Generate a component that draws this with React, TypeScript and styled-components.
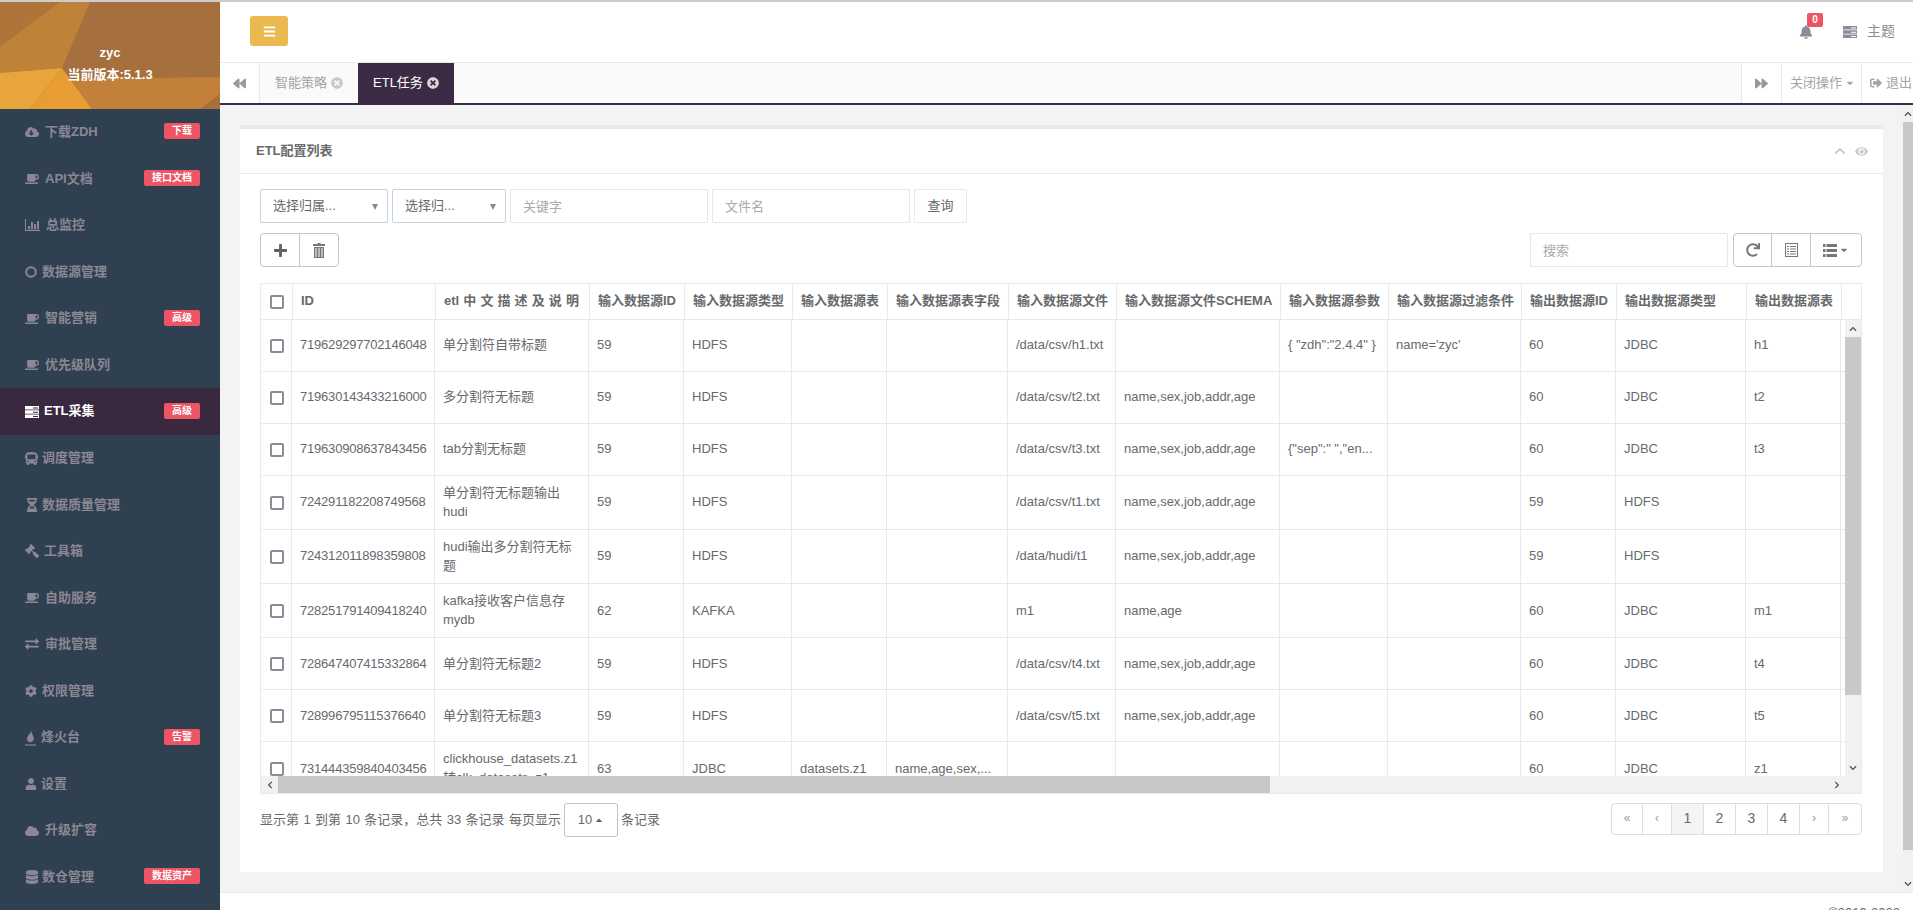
import React from 'react';
import styled, { createGlobalStyle } from 'styled-components';
import {
  FaBackward, FaBars, FaBell, FaBus, FaCaretDown, FaCaretUp, FaChevronDown, FaChevronLeft,
  FaChevronRight, FaChevronUp, FaCloud, FaCloudDownloadAlt, FaCog, FaCoffee, FaDatabase, FaExchangeAlt, FaEye,
  FaForward, FaGavel, FaHourglassHalf, FaPlus, FaRedo, FaSignOutAlt, FaTimesCircle, FaUser,
} from 'react-icons/fa';

const GlobalStyle = createGlobalStyle`
  html, body {
    margin: 0;
    height: 100%;
    overflow: hidden;
  }
  body {
    font-family: "Liberation Sans", "Noto Sans CJK SC", sans-serif;
    font-size: 13px;
    line-height: 1.42857;
    color: #676a6c;
  }
  * {
    box-sizing: border-box;
  }
`;

const FireIcon: React.FC = () => (
  <svg width="11" height="16" viewBox="0 0 11 16" fill="currentColor">
    <path d="M6 0c.6 2.400-1 3.400-2.400 5C2.400 6.400 1.800 7.600 2 9.200c.2 1.700 1.500 2.900 3.200 3 2.300.1 3.800-1.700 3.600-3.900-.1-1.500-.8-2.500-1.300-3.500-.7-1.500-.9-3.200-1.500-4.800z" />
    <rect x="0" y="14.400" width="11" height="1.200" />
  </svg>
);

const ServerIcon: React.FC = () => (
  <svg width="14" height="12" viewBox="0 0 14 12" fill="currentColor" fillRule="evenodd">
    <path d="M0 0h14v3.500H0z M8 1.500h5v1H8z" />
    <path d="M0 4.300h14v3.500H0z M8 5.800h5v1H8z" />
    <path d="M0 8.500h14V12H0z M8 10h5v1H8z" />
  </svg>
);

const BarsIcon: React.FC = () => (
  <svg width="15" height="12" viewBox="0 0 15 12" fill="currentColor">
    <path d="M0 0h1v11h14v1H0z" />
    <path d="M3 7h2v3.500H3z M6 3h2v7.500H6z M9 5h2v5.500H9z M12 2h2v8.500h-2z" />
  </svg>
);

const RingIcon: React.FC = () => (
  <svg width="12" height="12" viewBox="0 0 12 12" fill="none" stroke="currentColor" strokeWidth="2">
    <circle cx="6" cy="6" r="4.800" />
  </svg>
);

const TrashIcon: React.FC = () => (
  <svg width="12" height="15" viewBox="0 0 12 15" fill="currentColor">
    <path d="M4.500 0h3v1H12v2H0V1h4.500z" />
    <path d="M1 4h10v11H1z M2.500 5v9h1V5z M5.500 5v9h1V5z M8.500 5v9h1V5z" fillRule="evenodd" />
  </svg>
);

const ListAltIcon: React.FC = () => (
  <svg width="13" height="14" viewBox="0 0 13 14" fill="currentColor" fillRule="evenodd">
    <path d="M0 0h13v14H0z M1 1v12h11V1z" />
    <path d="M2 3h2v1H2z M5 3h6v1H5z M2 5.500h2v1H2z M5 5.500h6v1H5z M2 8h2v1H2z M5 8h6v1H5z M2 10.500h2v1H2z M5 10.500h6v1H5z" />
  </svg>
);

const RowsIcon: React.FC = () => (
  <svg width="14" height="13" viewBox="0 0 14 13" fill="currentColor">
    <path d="M0 0h2.500v3H0z M3.500 0H14v3H3.500z M0 5h2.500v3H0z M3.500 5H14v3H3.500z M0 10h2.500v3H0z M3.500 10H14v3H3.500z" />
  </svg>
);

type NavEntry = { label: string; icon: React.ReactNode; inset: number; badge?: string; active?: boolean };

const GavelIcon = styled(FaGavel)`
  transform: scaleX(-1);
`;

const navItems: NavEntry[] = [
  { label: '下载ZDH', icon: <FaCloudDownloadAlt size={14} />, inset: 20, badge: '下载' },
  { label: 'API文档', icon: <FaCoffee size={14} />, inset: 20, badge: '接口文档' },
  { label: '总监控', icon: <BarsIcon />, inset: 21 },
  { label: '数据源管理', icon: <RingIcon />, inset: 17 },
  { label: '智能营销', icon: <FaCoffee size={14} />, inset: 20, badge: '高级' },
  { label: '优先级队列', icon: <FaCoffee size={14} />, inset: 20 },
  { label: 'ETL采集', icon: <ServerIcon />, inset: 19, badge: '高级', active: true },
  { label: '调度管理', icon: <FaBus size={13} />, inset: 17 },
  { label: '数据质量管理', icon: <FaHourglassHalf size={14} />, inset: 17 },
  { label: '工具箱', icon: <GavelIcon size={14} />, inset: 19 },
  { label: '自助服务', icon: <FaCoffee size={14} />, inset: 20 },
  { label: '审批管理', icon: <FaExchangeAlt size={14} />, inset: 20 },
  { label: '权限管理', icon: <FaCog size={12} />, inset: 17 },
  { label: '烽火台', icon: <FireIcon />, inset: 16, badge: '告警' },
  { label: '设置', icon: <FaUser size={12} />, inset: 16 },
  { label: '升级扩容', icon: <FaCloud size={14} />, inset: 20 },
  { label: '数仓管理', icon: <FaDatabase size={14} />, inset: 17, badge: '数据资产' },
];

const headers = [
  '', 'ID', 'etl 中 文 描 述 及 说 明', '输入数据源ID', '输入数据源类型', '输入数据源表', '输入数据源表字段', '输入数据源文件',
  '输入数据源文件SCHEMA', '输入数据源参数', '输入数据源过滤条件', '输出数据源ID', '输出数据源类型', '输出数据源表', '',
];
const headWidths = [32, 143, 154, 95, 108, 95, 121, 108, 164, 108, 133, 95, 130, 95, 20];
const bodyWidths = [31, 143, 154, 95, 108, 95, 121, 108, 164, 108, 133, 95, 130, 95, 60];
const schema = 'name,sex,job,addr,age';

const rows: string[][] = [
  ['719629297702146048', '单分割符自带标题', '59', 'HDFS', '', '', '/data/csv/h1.txt', '', '{ "zdh":"2.4.4" }', "name='zyc'", '60', 'JDBC', 'h1'],
  ['719630143433216000', '多分割符无标题', '59', 'HDFS', '', '', '/data/csv/t2.txt', schema, '', '', '60', 'JDBC', 't2'],
  ['719630908637843456', 'tab分割无标题', '59', 'HDFS', '', '', '/data/csv/t3.txt', schema, '{"sep":" ","en...', '', '60', 'JDBC', 't3'],
  ['724291182208749568', '单分割符无标题输出hudi', '59', 'HDFS', '', '', '/data/csv/t1.txt', schema, '', '', '59', 'HDFS', ''],
  ['724312011898359808', 'hudi输出多分割符无标题', '59', 'HDFS', '', '', '/data/hudi/t1', schema, '', '', '59', 'HDFS', ''],
  ['728251791409418240', 'kafka接收客户信息存mydb', '62', 'KAFKA', '', '', 'm1', 'name,age', '', '', '60', 'JDBC', 'm1'],
  ['728647407415332864', '单分割符无标题2', '59', 'HDFS', '', '', '/data/csv/t4.txt', schema, '', '', '60', 'JDBC', 't4'],
  ['728996795115376640', '单分割符无标题3', '59', 'HDFS', '', '', '/data/csv/t5.txt', schema, '', '', '60', 'JDBC', 't5'],
  ['731444359840403456', 'clickhouse_datasets.z1 转clk_datasets_z1', '63', 'JDBC', 'datasets.z1', 'name,age,sex,...', '', '', '', '', '60', 'JDBC', 'z1'],
];

const pages: { label: string; w: number; active?: boolean; faint?: boolean }[] = [
  { label: '«', w: 31, faint: true },
  { label: '‹', w: 29, faint: true },
  { label: '1', w: 32, active: true },
  { label: '2', w: 32 },
  { label: '3', w: 32 },
  { label: '4', w: 32 },
  { label: '›', w: 29, faint: true },
  { label: '»', w: 32, faint: true },
];

export default function App() {
  return (
    <Page>
      <GlobalStyle />
      <Sidebar>
        <Profile>
          <ProfileArt viewBox="0 0 220 107" preserveAspectRatio="none">
            <rect width="220" height="107" fill="#a56f3e" />
            <polygon points="0,0 60,0 0,45" fill="#ad7538" />
            <polygon points="60,0 90,0 62,66 0,71 0,45" fill="#bf8239" />
            <polygon points="0,71 62,66 30,107 0,107" fill="#e8a53c" />
            <polygon points="62,66 92,107 30,107" fill="#e89c34" />
            <polygon points="62,66 70,77 220,75 220,92 200,107 92,107" fill="#c2803a" />
          </ProfileArt>
          <ProfileName>zyc</ProfileName>
          <ProfileName>当前版本:5.1.3</ProfileName>
        </Profile>
        <Nav>
          {navItems.map((item) => (
            <NavItem key={item.label} $active={item.active}>
              <NavIcon $inset={item.inset}>{item.icon}</NavIcon>
              <NavLabel>{item.label}</NavLabel>
              {item.badge && <NavBadge>{item.badge}</NavBadge>}
            </NavItem>
          ))}
        </Nav>
      </Sidebar>

      <Main>
        <TopBar>
          <MenuButton><FaBars size={13} /></MenuButton>
          <TopActions>
            <BellWrap>
              <FaBell size={14} />
              <BellCount>0</BellCount>
            </BellWrap>
            <ThemeLink><ServerIcon />主题</ThemeLink>
          </TopActions>
        </TopBar>

        <TabBar>
          <TabNavButton><FaBackward size={13} /></TabNavButton>
          <Tab>智能策略<FaTimesCircle size={12} /></Tab>
          <Tab $active>ETL任务<FaTimesCircle size={12} /></Tab>
          <TabSpacer />
          <TabNavButton $side="right"><FaForward size={13} /></TabNavButton>
          <TabAction $w={80} $gap={1}>关闭操作<Caret><FaCaretDown size={10} /></Caret></TabAction>
          <TabAction $w={52} $gap={4}><FaSignOutAlt size={12} />退出</TabAction>
        </TabBar>

        <ContentRow>
          <Content>
            <Panel>
              <PanelTitle>
                <PanelHeading>ETL配置列表</PanelHeading>
                <PanelTools>
                  <FaChevronUp size={12} />
                  <FaEye size={13} />
                </PanelTools>
              </PanelTitle>
              <PanelBody>
                <FilterRow>
                  <FakeSelect $w={128}>选择归属...<SelectArrow /></FakeSelect>
                  <FakeSelect $w={114}>选择归...<SelectArrow /></FakeSelect>
                  <TextInput $w={198} placeholder="关键字" />
                  <TextInput $w={198} placeholder="文件名" />
                  <QueryButton>查询</QueryButton>
                </FilterRow>

                <ToolRow>
                  <ButtonGroup>
                    <ToolButton $w={39} $dark><FaPlus size={15} /></ToolButton>
                    <ToolButton $w={38}><TrashIcon /></ToolButton>
                  </ButtonGroup>
                  <ToolRight>
                    <SearchInput placeholder="搜索" />
                    <ButtonGroup>
                      <ToolButton $w={38}><FaRedo size={14} /></ToolButton>
                      <ToolButton $w={39}><ListAltIcon /></ToolButton>
                      <ToolButton $w={50}><RowsIcon /><Caret><FaCaretDown size={10} /></Caret></ToolButton>
                    </ButtonGroup>
                  </ToolRight>
                </ToolRow>

                <TableBox>
                  <Grid $w={1600}>
                    <colgroup>
                      {headWidths.map((w, i) => <Col key={i} $w={w} />)}
                    </colgroup>
                    <thead>
                      <tr>
                        {headers.map((h, i) => (
                          <HeadCell key={i} $last={i === headers.length - 1}>
                            {i === 0 ? <CheckBox /> : h}
                          </HeadCell>
                        ))}
                      </tr>
                    </thead>
                  </Grid>
                  <TableMiddle>
                    <BodyViewport>
                      <Grid $w={1640}>
                        <colgroup>
                          {bodyWidths.map((w, i) => <Col key={i} $w={w} />)}
                        </colgroup>
                        <tbody>
                          {rows.map((row) => (
                            <tr key={row[0]}>
                              <BodyCell><CheckBox /></BodyCell>
                              {row.map((value, i) => (
                                <BodyCell key={i}>
                                  {i === 0 ? <IdText>{value}</IdText> : value}
                                </BodyCell>
                              ))}
                              <BodyCell />
                            </tr>
                          ))}
                        </tbody>
                      </Grid>
                    </BodyViewport>
                    <VTrack>
                      <ScrollArrow $h={17}><FaChevronUp size={8} /></ScrollArrow>
                      <VThumb />
                      <VTrackFill />
                      <ScrollArrow $h={17}><FaChevronDown size={8} /></ScrollArrow>
                    </VTrack>
                  </TableMiddle>
                  <HTrack>
                    <HArrow><FaChevronLeft size={8} /></HArrow>
                    <HThumb />
                    <HFill />
                    <HArrow><FaChevronRight size={8} /></HArrow>
                    <HCorner />
                  </HTrack>
                </TableBox>

                <PagerRow>
                  <PageInfo>
                    显示第 1 到第 10 条记录，总共 33 条记录 每页显示
                    <PageSize>10<Caret><FaCaretUp size={10} /></Caret></PageSize>
                    条记录
                  </PageInfo>
                  <Pagination>
                    {pages.map((p, i) => (
                      <PageButton key={i} $w={p.w} $active={p.active} $faint={p.faint}>{p.label}</PageButton>
                    ))}
                  </Pagination>
                </PagerRow>
              </PanelBody>
            </Panel>
          </Content>
          <PageScroll>
            <PageArrow><FaChevronUp size={8} /></PageArrow>
            <PageThumb />
            <PageArrow><FaChevronDown size={8} /></PageArrow>
          </PageScroll>
        </ContentRow>

        <Footer>©2019-2023</Footer>
      </Main>
    </Page>
  );
}

const Page = styled.div`
  display: flex;
  height: 100vh;
  overflow: hidden;
  border-top: 2px solid #cdcdcd;
  background: #fff;
`;

const Sidebar = styled.aside`
  flex: 0 0 220px;
  background: #2f4050;
  overflow: hidden;
`;

const Profile = styled.div`
  position: relative;
  height: 107px;
  padding-top: 40px;
  text-align: center;
`;

const ProfileArt = styled.svg`
  position: absolute;
  inset: 0;
  width: 100%;
  height: 100%;
`;

const ProfileName = styled.div`
  position: relative;
  height: 22px;
  line-height: 22px;
  color: #fff;
  font-weight: 700;
`;

const Nav = styled.nav`
  display: flex;
  flex-direction: column;
`;

const NavItem = styled.div<{ $active?: boolean }>`
  display: flex;
  align-items: center;
  padding: 14px 20px 14px 25px;
  font-weight: 700;
  color: ${(p) => (p.$active ? '#fff' : '#8b8794')};
  background: ${(p) => (p.$active ? '#3a283e' : 'transparent')};
`;

const NavIcon = styled.span<{ $inset: number }>`
  display: flex;
  align-items: center;
  flex: 0 0 ${(p) => p.$inset}px;
`;

const NavLabel = styled.span`
  flex: 1;
`;

const NavBadge = styled.span`
  padding: 0 8px;
  height: 16px;
  line-height: 16px;
  margin-top: -2px;
  font-size: 10px;
  font-weight: 700;
  color: #fff;
  background: #ed5565;
  border-radius: 2px;
`;

const Main = styled.main`
  flex: 1;
  min-width: 0;
  display: flex;
  flex-direction: column;
  overflow: hidden;
`;

const TopBar = styled.header`
  flex: 0 0 61px;
  display: flex;
  justify-content: space-between;
  align-items: flex-start;
  padding: 14px 18px 0 30px;
  border-bottom: 1px solid #e7eaec;
`;

const MenuButton = styled.button`
  display: flex;
  align-items: center;
  justify-content: center;
  width: 38px;
  height: 30px;
  padding: 0;
  color: #fff;
  background: #ebb94f;
  border: 0;
  border-radius: 3px;
`;

const TopActions = styled.div`
  display: flex;
  align-items: center;
  gap: 30px;
  height: 32px;
  color: #8f8a99;
`;

const BellWrap = styled.span`
  position: relative;
  display: flex;
`;

const BellCount = styled.span`
  position: absolute;
  top: -12px;
  left: 8px;
  width: 16px;
  height: 14px;
  line-height: 14px;
  text-align: center;
  font-size: 10px;
  font-weight: 700;
  color: #fff;
  background: #ed5565;
  border-radius: 2px;
`;

const ThemeLink = styled.span`
  display: flex;
  align-items: center;
  gap: 10px;
  font-size: 14px;
`;

const TabBar = styled.div`
  flex: 0 0 42px;
  display: flex;
  background: #fafafa;
  border-bottom: 2px solid #3d2b45;
  overflow: hidden;
`;

const TabNavButton = styled.div<{ $side?: string }>`
  flex: 0 0 40px;
  display: flex;
  align-items: center;
  justify-content: center;
  color: #999;
  background: #fff;
  border-right: ${(p) => (p.$side === 'right' ? 0 : '1px solid #e7eaec')};
  border-left: ${(p) => (p.$side === 'right' ? '1px solid #e7eaec' : 0)};
`;

const Tab = styled.div<{ $active?: boolean }>`
  display: flex;
  align-items: center;
  gap: 4px;
  padding: 0 15px;
  color: ${(p) => (p.$active ? '#fff' : '#a3a3a3')};
  background: ${(p) => (p.$active ? '#3d2b45' : 'transparent')};
  & svg {
    color: ${(p) => (p.$active ? '#d8d8d8' : '#c8c8c8')};
  }
`;

const TabSpacer = styled.div`
  flex: 1;
`;

const TabAction = styled.div<{ $w: number; $gap: number }>`
  flex: 0 0 ${(p) => p.$w}px;
  display: flex;
  align-items: center;
  gap: ${(p) => p.$gap}px;
  padding-left: 8px;
  color: #a3a3a3;
  background: #fff;
  border-left: 1px solid #e7eaec;
  white-space: nowrap;
`;

const Caret = styled.span`
  display: inline-flex;
  margin-left: 2px;
`;

const ContentRow = styled.div`
  flex: 1;
  min-height: 0;
  display: flex;
  background: #f3f3f4;
`;

const Content = styled.div`
  flex: 1;
  min-width: 0;
  padding: 20px;
`;

const Panel = styled.section`
  height: 100%;
  display: flex;
  flex-direction: column;
  background: #fff;
  border-top: 4px solid #e7eaec;
`;

const PanelTitle = styled.div`
  flex: 0 0 45px;
  display: flex;
  align-items: center;
  justify-content: space-between;
  padding: 0 15px 0 16px;
  border-bottom: 1px solid #e7eaec;
`;

const PanelHeading = styled.h5`
  margin: 0;
  font-size: 13px;
  font-weight: 700;
`;

const PanelTools = styled.div`
  display: flex;
  align-items: center;
  gap: 9px;
  color: #c8cacc;
`;

const PanelBody = styled.div`
  flex: 1;
  padding: 15px 21px 0 20px;
`;

const FilterRow = styled.div`
  display: flex;
  gap: 4px;
  height: 34px;
`;

const FakeSelect = styled.div<{ $w: number }>`
  position: relative;
  width: ${(p) => p.$w}px;
  line-height: 32px;
  padding-left: 12px;
  color: #676a6c;
  border: 1px solid #c5d1de;
  border-radius: 2px;
`;

const SelectArrow = styled.span`
  position: absolute;
  top: 14px;
  right: 9px;
  border-style: solid;
  border-width: 6px 3.5px 0;
  border-color: #888 transparent transparent;
`;

const TextInput = styled.input<{ $w: number }>`
  width: ${(p) => p.$w}px;
  height: 34px;
  padding: 0 12px;
  font: inherit;
  color: #676a6c;
  border: 1px solid #e5e6e7;
  border-radius: 1px;
  outline: none;
  &::placeholder {
    color: #aaa;
  }
`;

const QueryButton = styled.button`
  width: 53px;
  height: 34px;
  padding: 0;
  font: inherit;
  color: #676a6c;
  background: #fff;
  border: 1px solid #e7eaec;
  border-radius: 1px;
`;

const ToolRow = styled.div`
  display: flex;
  justify-content: space-between;
  height: 34px;
  margin-top: 10px;
`;

const ToolRight = styled.div`
  display: flex;
  gap: 5px;
`;

const SearchInput = styled.input`
  width: 198px;
  height: 34px;
  padding: 0 12px;
  font: inherit;
  border: 1px solid #e5e6e7;
  border-radius: 1px;
  outline: none;
  &::placeholder {
    color: #aaa;
  }
`;

const ButtonGroup = styled.div`
  display: flex;
  height: 34px;
  border: 1px solid #c4c4c4;
  border-radius: 4px;
`;

const ToolButton = styled.div<{ $w: number; $dark?: boolean }>`
  width: ${(p) => p.$w}px;
  display: flex;
  align-items: center;
  justify-content: center;
  color: ${(p) => (p.$dark ? '#5f6264' : '#777')};
  border-right: 1px solid #c4c4c4;
  &:last-child {
    border-right: 0;
  }
`;

const TableBox = styled.div`
  margin-top: 16px;
  height: 511px;
  display: flex;
  flex-direction: column;
  border: 1px solid #e7eaec;
`;

const Grid = styled.table<{ $w: number }>`
  width: ${(p) => p.$w}px;
  table-layout: fixed;
  border-collapse: separate;
  border-spacing: 0;
`;

const Col = styled.col<{ $w: number }>`
  width: ${(p) => p.$w}px;
`;

const HeadCell = styled.th<{ $last?: boolean }>`
  height: 36px;
  padding: 0 8px;
  font-weight: 700;
  text-align: left;
  white-space: nowrap;
  word-spacing: 0.5px;
  overflow: hidden;
  border-bottom: 1px solid #e7eaec;
  border-right: ${(p) => (p.$last ? 0 : '1px solid #e7eaec')};
`;

const TableMiddle = styled.div`
  height: 456px;
  display: flex;
`;

const BodyViewport = styled.div`
  flex: 1;
  min-width: 0;
  overflow: hidden;
`;

const BodyCell = styled.td`
  height: 52px;
  padding: 8px;
  vertical-align: middle;
  overflow-wrap: anywhere;
  border-bottom: 1px solid #e7eaec;
  border-right: 1px solid #e7eaec;
`;

const IdText = styled.span`
  letter-spacing: -0.2px;
  white-space: nowrap;
`;

const CheckBox = styled.span`
  display: block;
  width: 14px;
  height: 14px;
  margin-left: 1px;
  background: #fff;
  border: 2px solid #8f8a99;
  border-radius: 2px;
`;

const VTrack = styled.div`
  flex: 0 0 16px;
  display: flex;
  flex-direction: column;
  background: #f1f1f1;
`;

const ScrollArrow = styled.div<{ $h: number }>`
  flex: 0 0 ${(p) => p.$h}px;
  display: flex;
  align-items: center;
  justify-content: center;
  color: #505050;
`;

const VThumb = styled.div`
  flex: 0 0 358px;
  background: #c8c8c8;
`;

const VTrackFill = styled.div`
  flex: 1;
`;

const HTrack = styled.div`
  flex: 0 0 17px;
  display: flex;
  background: #f1f1f1;
`;

const HArrow = styled.div`
  flex: 0 0 17px;
  display: flex;
  align-items: center;
  justify-content: center;
  color: #505050;
`;

const HThumb = styled.div`
  flex: 0 0 992px;
  background: #c8c8c8;
`;

const HFill = styled.div`
  flex: 1;
`;

const HCorner = styled.div`
  flex: 0 0 16px;
`;

const PagerRow = styled.div`
  display: flex;
  justify-content: space-between;
  margin-top: 9px;
`;

const PageInfo = styled.div`
  display: flex;
  align-items: center;
  gap: 3px;
  height: 34px;
  white-space: pre;
  word-spacing: 0.8px;
`;

const PageSize = styled.div`
  display: flex;
  align-items: center;
  justify-content: center;
  width: 54px;
  height: 34px;
  border: 1px solid #c4c4c4;
  border-radius: 3px;
`;

const Pagination = styled.div`
  display: flex;
  height: 32px;
  background: #fff;
  border: 1px solid #dddddd;
  border-radius: 4px;
`;

const PageButton = styled.div<{ $w: number; $active?: boolean; $faint?: boolean }>`
  width: ${(p) => p.$w}px;
  display: flex;
  align-items: center;
  justify-content: center;
  font-size: ${(p) => (p.$faint ? 12 : 14)}px;
  color: ${(p) => (p.$faint ? '#999' : '#676a6c')};
  background: ${(p) => (p.$active ? '#f4f4f4' : 'transparent')};
  border-right: 1px solid #dddddd;
  &:last-child {
    border-right: 0;
  }
`;

const PageScroll = styled.div`
  flex: 0 0 10px;
  display: flex;
  flex-direction: column;
  background: #f1f1f1;
  overflow: hidden;
`;

const PageArrow = styled.div`
  flex: 0 0 17px;
  display: flex;
  align-items: center;
  justify-content: center;
  color: #505050;
`;

const PageThumb = styled.div`
  flex: 1;
  background: #c8c8c8;
  margin-bottom: 25px;
`;

const Footer = styled.footer`
  flex: 0 0 18px;
  padding: 11px 13px 0 0;
  text-align: right;
  background: #fff;
  border-top: 1px solid #e7eaec;
  overflow: hidden;
`;
